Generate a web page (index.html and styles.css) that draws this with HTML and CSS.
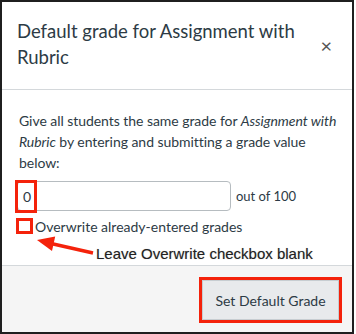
FILE: index.html
```html
<!DOCTYPE html>
<html lang="en">
<head>
    <meta charset="UTF-8" />
    <title>Default grade</title>
    <link rel="stylesheet" href="styles.css">
</head>
<body>
    <div class="dialog">
        <header class="dialog-header">
            <h2 class="dialog-title">Default grade for Assignment with Rubric</h2>
            <span class="close">&times;</span>
        </header>

        <section class="dialog-body">
            <p class="intro">Give all students the same grade for <em>Assignment with Rubric</em> by entering and submitting a grade value below:</p>

            <div class="grade-row">
                <div class="grade-input">
                    <span class="grade-value">0</span>
                    <span class="mark mark-grade"></span>
                </div>
                <span class="out-of">out of 100</span>
            </div>

            <label class="check-row">
                <span class="mark mark-check"></span>
                <span>Overwrite already-entered grades</span>
            </label>

            <div class="note">
                <svg class="arrow" width="60" height="24" viewBox="0 0 60 24">
                    <path d="M15 9.5 L57 19" stroke="#f4220b" stroke-width="3.5" fill="none" />
                    <path d="M1 6 L19.2 2.5 L16 17 Z" fill="#f4220b" />
                </svg>
                <span class="note-text">Leave Overwrite checkbox blank</span>
            </div>
        </section>

        <footer class="dialog-footer">
            <div class="mark mark-button">
                <button class="btn">Set Default Grade</button>
            </div>
        </footer>
    </div>
</body>
</html>
```

FILE: styles.css
```css
body {
    margin: 0;
    background: #fff;
    font-family: Lato, "Open Sans", sans-serif;
    color: #2d3b45;
}

.dialog {
    width: 354px;
    height: 334px;
    box-sizing: border-box;
    border: 2px solid #1f1f1f;
    display: flex;
    flex-direction: column;
}

.dialog-header {
    display: flex;
    align-items: center;
    padding: 16px 16px 19px 15px;
    border-bottom: 1px solid #d4d8db;
}

.dialog-title {
    margin: 0;
    flex: 1;
    font-size: 18.5px;
    font-weight: normal;
    line-height: 26px;
}

.close {
    font-size: 20px;
    color: #555;
    margin-right: 4px;
    margin-top: 2px;
}

.dialog-body {
    padding: 20px 4px 0 15px;
    height: 175px;
    box-sizing: border-box;
}

.intro {
    margin: 0 0 0 2px;
    font-size: 14px;
    line-height: 21px;
    letter-spacing: -0.05px;
}

.grade-row {
    display: flex;
    align-items: center;
    margin-top: 8px;
}

.grade-input {
    position: relative;
    width: 214px;
    height: 30px;
    box-sizing: border-box;
    border: 1px solid #b6bcc0;
    border-radius: 4px;
    display: flex;
    align-items: center;
    padding-left: 5px;
    font-size: 14px;
}

.out-of {
    margin-left: 5px;
    font-size: 13px;
}

.mark {
    border: 3px solid #f4220b;
    box-sizing: border-box;
}

.mark-grade {
    position: absolute;
    left: -3px;
    top: -2px;
    width: 22px;
    height: 33px;
}

.check-row {
    display: flex;
    align-items: center;
    margin-top: 7px;
    font-size: 14px;
    height: 16px;
}

.mark-check {
    width: 17px;
    height: 16px;
    margin: 0 2px 0 -1px;
}

.note {
    position: relative;
    height: 30px;
}

.arrow {
    position: absolute;
    left: 19px;
    top: 0;
}

.note-text {
    position: absolute;
    left: 79px;
    top: 11px;
    font-family: "Liberation Sans", Arial, sans-serif;
    font-size: 15px;
    color: #222;
    text-shadow: 0 0 1px rgba(0, 0, 0, 0.3);
}

.dialog-footer {
    flex: 1;
    background: #f5f5f5;
    border-top: 1px solid #d4d8db;
    display: flex;
    justify-content: flex-end;
    align-items: flex-start;
    padding: 11px 10px 0 0;
}

.mark-button {
    width: 143px;
    height: 46px;
}

.btn {
    width: 100%;
    height: 100%;
    border: 1px solid #c7cdd1;
    background: #e8eaec;
    color: #2d3b45;
    font-family: Lato, sans-serif;
    font-size: 14px;
    padding: 0;
}
```
